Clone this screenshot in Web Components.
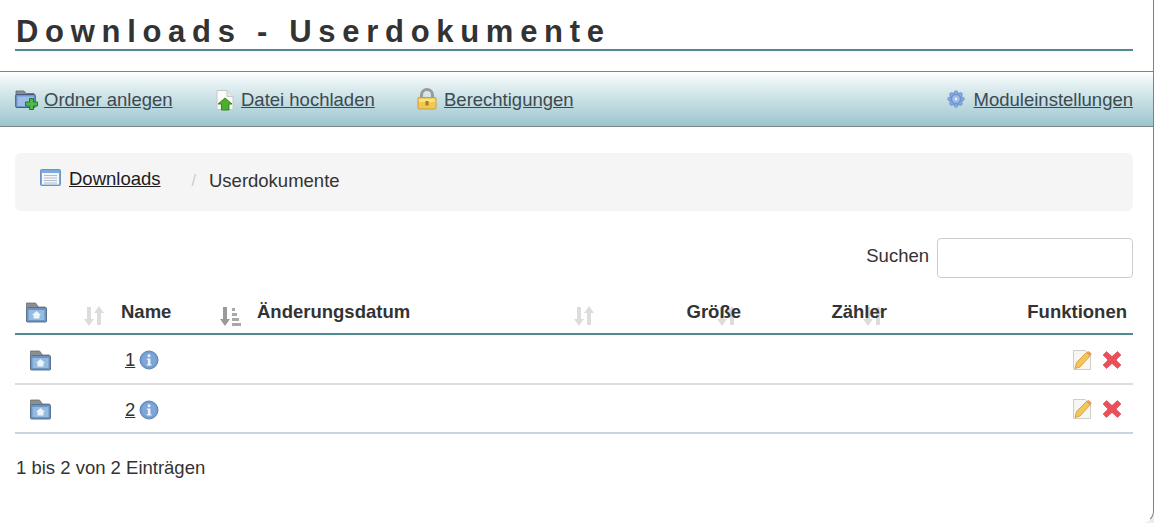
<!DOCTYPE html>
<html lang="de"><head><meta charset="utf-8"><title>Downloads</title>
<style>
html,body{margin:0;padding:0;background:#e3f1f3;height:523px;overflow:hidden}
body{font:18.5px "Liberation Sans",Arial,sans-serif;color:#333}
</style></head><body>
<page-shell>
  <page-title>Downloads - Userdokumente</page-title>
  <tool-bar>
    <tool-link icon="folder-add" gap="5" slot="left" style="width:199px">Ordner anlegen</tool-link>
    <tool-link icon="file-up" gap="5" slot="left" style="width:203px">Datei hochladen</tool-link>
    <tool-link icon="lock" gap="5" slot="left">Berechtigungen</tool-link>
    <tool-link icon="gear" gap="9" slot="right">Moduleinstellungen</tool-link>
  </tool-bar>
  <bread-crumb current="Userdokumente">Downloads</bread-crumb>
  <search-box>Suchen</search-box>
  <data-table>
    <table-row head>
      <table-cell col="1" sort="both"><ui-icon name="folder-home"></ui-icon></table-cell>
      <table-cell col="2" sort="desc">Name</table-cell>
      <table-cell col="3" sort="both">Änderungsdatum</table-cell>
      <table-cell col="4" sort="both" align="right">Größe</table-cell>
      <table-cell col="5" sort="both" align="right">Zähler</table-cell>
      <table-cell col="6" align="right">Funktionen</table-cell>
    </table-row>
    <table-row>
      <table-cell col="1" indent><ui-icon name="folder-home"></ui-icon></table-cell>
      <table-cell col="2" indent><name-link>1</name-link></table-cell>
      <table-cell col="3"></table-cell><table-cell col="4"></table-cell><table-cell col="5"></table-cell>
      <table-cell col="6" align="right"><row-actions></row-actions></table-cell>
    </table-row>
    <table-row last>
      <table-cell col="1" indent><ui-icon name="folder-home"></ui-icon></table-cell>
      <table-cell col="2" indent><name-link>2</name-link></table-cell>
      <table-cell col="3"></table-cell><table-cell col="4"></table-cell><table-cell col="5"></table-cell>
      <table-cell col="6" align="right"><row-actions></row-actions></table-cell>
    </table-row>
  </data-table>
  <table-info>1 bis 2 von 2 Einträgen</table-info>
</page-shell>
<script>
const ICONS={
'folder-add':`<svg viewBox="0 0 24 22" width="24" height="22"><path d="M1 3h8l2 2.500h8v4H1z" fill="#8a8f96" stroke="#5f6670" stroke-width=".8"/><rect x=".7" y="6.500" width="19.600" height="13" rx="1" fill="#6f9ad0" stroke="#47597a"/><rect x="2.500" y="8.500" width="16" height="9.500" fill="#9dbde6"/><path d="M14.500 10.500h4v3.500h4v4h-4v3.500h-4V18h-4v-4h4z" fill="#4fb848" stroke="#1f7a2c"/></svg>`,
'file-up':`<svg viewBox="0 0 22 24" width="22" height="24"><path d="M3 3.500h10l6 6v13H3z" fill="#fbfbf8" stroke="#c4c8c8"/><path d="M13 3.500v6h6" fill="#e4e6e2" stroke="#c4c8c8"/><path d="M11 11l7 6h-3v6H7.500v-6H4z" fill="#4cae2c" stroke="#2d7f19" stroke-width=".9"/></svg>`,
'lock':`<svg viewBox="1 0 22 22" width="22" height="22"><path d="M5.500 10V7a5.500 5.500 0 0 1 11 0v3" fill="none" stroke="#9a9a98" stroke-width="3"/><rect x="2" y="9.500" width="18" height="11.500" rx="1" fill="#f2c94f" stroke="#cf9f3c"/><rect x="3" y="11" width="16" height="3" fill="#f8e08c"/><rect x="9.500" y="13" width="3" height="4.500" fill="#a87b22"/></svg>`,
'gear':`<svg viewBox="0 0 18 18" width="18" height="18"><g fill="#86abe0" stroke="#5f88c6" stroke-width=".6"><circle cx="9" cy="9" r="6.200"/><circle cx="9" cy="2.600" r="1.900"/><circle cx="9" cy="15.400" r="1.900"/><circle cx="2.600" cy="9" r="1.900"/><circle cx="15.400" cy="9" r="1.900"/><circle cx="4.500" cy="4.500" r="1.900"/><circle cx="13.500" cy="4.500" r="1.900"/><circle cx="4.500" cy="13.500" r="1.900"/><circle cx="13.500" cy="13.500" r="1.900"/></g><circle cx="9" cy="9" r="4.200" fill="#a9c5ec" stroke="#5f88c6" stroke-width=".8"/><circle cx="9" cy="9" r="2" fill="#e6effa" stroke="#6d94cf" stroke-width=".6"/></svg>`,
'list':`<svg viewBox="0 0 22 18" width="22" height="18"><rect x=".5" y=".5" width="20" height="16" rx="1" fill="#7ba9e0" stroke="#6a94c8"/><rect x="2" y="4" width="17" height="11.500" fill="#f4f6f9"/><path d="M4 6.500h13M4 9h13M4 11.500h13M4 14h13" stroke="#b3bcc8" stroke-width="1"/></svg>`,
'folder-home':`<svg viewBox="2 2 21 20" width="21" height="21"><path d="M2.500 2.500h9l3 4h7v4h-19z" fill="#8c8e90" stroke="#6b6f74" stroke-width=".8"/><rect x="2.500" y="7" width="20" height="14.500" rx="1" fill="#6c93c2" stroke="#5a7490"/><rect x="4.500" y="9.500" width="16" height="10" fill="#94bce2"/><path d="M12.500 10.500l4.500 4h-1.500v3.500h-6v-3.500H8z" fill="#eef4fa"/></svg>`,
'info':`<svg viewBox="0 0 20 20" width="20" height="20"><circle cx="10" cy="10" r="9" fill="#6f9bd1" stroke="#5f86b8"/><circle cx="10" cy="10" r="7.200" fill="#7ea6d8"/><circle cx="10" cy="5.800" r="1.500" fill="#eef4fb"/><path d="M7.800 8.500h3.600v5.700h1.100v1.300H7.800v-1.300h1.100V9.800H7.800z" fill="#eef4fb"/></svg>`,
'edit':`<svg viewBox="0 0 22 22" width="22" height="22"><path d="M2.500 1.500h12l5 5v14h-17z" fill="#f6f6f3" stroke="#cfcfca"/><path d="M5.500 13.500L15.500 3.500l3.500 3.500L9 18l-5 1.500z" fill="#f2c75a" stroke="#d89a3d" stroke-width=".9"/><path d="M15.500 3.500l3.500 3.500 1.500-1.500c.6-.8-2.700-3.800-3.500-3.200z" fill="#ef9a5a"/></svg>`,
'del':`<svg viewBox="0 0 20 20" width="20" height="20"><path d="M4.500 1.500L10 6.500l5.500-5 3.500 3.500-5 5 5 5-3.500 3.500-5.500-5-5.500 5L1 15l5-5-5-5z" fill="#e9505a" stroke="#d94450" stroke-width=".6"/></svg>`,
'sort-both':`<svg viewBox="0 0 22 22" width="22" height="22" fill="#dcdcdc"><path d="M4 2h4v12h3l-5 7-5-7h3z"/><path d="M14 20h4V8h3l-5-7-5 7h3z"/></svg>`,
'sort-desc':`<svg viewBox="0 0 22 22" width="22" height="22"><path d="M4 2h4v12h3l-5 7-5-7h3z" fill="#9a9a9a"/><g fill="#a8a8a8"><rect x="13" y="3" width="3" height="3"/><rect x="13" y="8" width="5" height="3"/><rect x="13" y="13" width="7" height="3"/><rect x="13" y="18" width="9" height="3"/></g></svg>`
};
customElements.define('ui-icon',class extends HTMLElement{
  static get observedAttributes(){return ['name'];}
  constructor(){super();this.attachShadow({mode:'open'});}
  attributeChangedCallback(){this.render();}
  connectedCallback(){this.render();}
  render(){this.shadowRoot.innerHTML=`<style>:host{display:inline-flex;line-height:0}svg{display:block}</style>${ICONS[this.getAttribute('name')]||''}`;}
});
function def(name,css,html,init){
  customElements.define(name,class extends HTMLElement{
    constructor(){super();const s=this.attachShadow({mode:'open'});s.innerHTML=`<style>${css}</style>${html}`;}
    connectedCallback(){init&&init(this,this.shadowRoot);}
  });
}
def('page-shell',`:host{display:block;box-sizing:border-box;width:1154px;height:523px;background:#fff;border-right:1px solid #808080;border-bottom:1px solid #fff;border-bottom-right-radius:12px;overflow:hidden}`,'<slot></slot>');
def('page-title',`:host{display:block;margin:0 20px 0 15px;height:51px;box-sizing:border-box;padding:15px 0 0 1px;border-bottom:2px solid #4f8a91;font:bold 31px/34px "Liberation Sans",Arial,sans-serif;letter-spacing:6.7px;color:#333;white-space:nowrap}`,'<slot></slot>');
def('tool-bar',`:host{display:flex;justify-content:space-between;align-items:center;box-sizing:border-box;height:56px;margin-top:20px;padding:0 20px 0 15px;border-top:1px solid #7f8486;border-bottom:1px solid #7f8486;background:linear-gradient(#fff 0,#e6f1f3 20%,#9cc5cf 100%)}
.g{display:flex;align-items:center}`,'<div class="g"><slot name="left"></slot></div><div class="g"><slot name="right"></slot></div>');
def('tool-link',`:host{display:flex;align-items:center;color:#3c4a50;text-decoration:underline;white-space:nowrap}
span{padding-top:2px}`,'<ui-icon id="i"></ui-icon><span id="t"><slot></slot></span>',(h,s)=>{
  s.getElementById('i').setAttribute('name',h.getAttribute('icon'));
  s.getElementById('t').style.marginLeft=h.getAttribute('gap')+'px';
});
def('bread-crumb',`:host{display:flex;box-sizing:border-box;height:58px;margin:26px 20px 0 15px;padding:0 0 0 25px;background:#f5f5f5;border-radius:6px;color:#333}
.l{display:flex;align-items:flex-start;padding-top:16px;color:#1c1c1c;text-decoration:underline;line-height:20px}
.l ui-icon{margin-right:7px}
.s{color:#ccc;margin:18px 13px 0 31px;line-height:20px;font-size:16px}
.c{margin-top:18px;line-height:20px}`,'<div class="l"><ui-icon name="list"></ui-icon><slot></slot></div><span class="s">/</span><span class="c" id="c"></span>',(h,s)=>{s.getElementById('c').textContent=h.getAttribute('current');});
def('search-box',`:host{display:flex;justify-content:flex-end;align-items:center;gap:8px;height:40px;margin:27px 20px 0 15px;color:#333}
.i{box-sizing:border-box;width:196px;height:40px;border:1px solid #ccc;border-radius:4px;background:#fff}
span{position:relative;top:-2px}`,'<span><slot></slot></span><div class="i"></div>');
def('data-table',`:host{display:block;margin:16px 20px 0 15px}`,'<slot></slot>');
def('table-row',`:host{display:grid;grid-template-columns:96px 136px 354px 146px 146px 240px;box-sizing:border-box;height:50px;border-bottom:2px solid #ddd;align-items:center}
:host([head]){height:41px;border-bottom-color:#4f8a91;font-weight:bold}
:host([last]){height:49px;border-bottom-color:#c9d6de}`,'<slot></slot>');
def('table-cell',`:host{display:flex;position:relative;align-items:center;box-sizing:border-box;height:100%;padding:2px 6px 0 10px;white-space:nowrap}
:host([sort]),:host([col="6"]){padding-top:0}
:host([align=right]){justify-content:flex-end}
:host([indent]){padding-left:15px}
.t{position:relative;z-index:1;display:flex}
.b{position:absolute;right:6px;top:11px}
:host([col="4"]) .b,:host([col="5"]) .b{right:9px}`,'<span class="b" id="b"></span><span class="t"><slot></slot></span>',(h,s)=>{
  const o=h.getAttribute('sort');
  if(o&&!s.querySelector('ui-icon')){const i=document.createElement('ui-icon');i.setAttribute('name','sort-'+o);s.getElementById('b').appendChild(i);}
  if(o||h.getAttribute('col')==='6'&&h.parentElement.hasAttribute('head'))s.querySelector('.t').style.marginBottom='3px';
  if(h.getAttribute('col')==='1'&&o){const t=s.querySelector('.t');t.style.marginBottom='3px';t.style.marginLeft='1px';}
});
def('name-link',`:host{display:inline-flex;align-items:center;gap:4px;color:#333;margin-left:-1px}u{color:#333}`,'<u><slot></slot></u><ui-icon name="info"></ui-icon>');
def('row-actions',`:host{display:flex;align-items:center;gap:9px;padding:1px 5px 0 0}`,'<ui-icon name="edit"></ui-icon><ui-icon name="del"></ui-icon>');
def('table-info',`:host{display:block;margin:24px 0 0 16px;line-height:20px;color:#333}`,'<slot></slot>');
</script>
</body></html>
